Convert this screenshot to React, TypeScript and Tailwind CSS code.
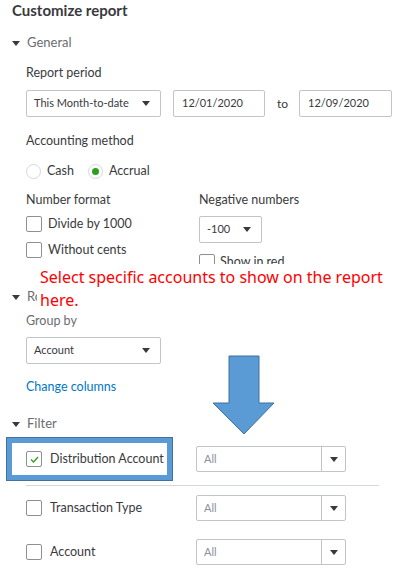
import React from "react";

const font = { fontFamily: "Lato, 'Open Sans', sans-serif" };

function Caret({ className = "" }: { className?: string }) {
  return (
    <svg width="8" height="5" viewBox="0 0 8 5" className={className}>
      <path d="M0 0 H8 L4 5 Z" fill="#393a3d" />
    </svg>
  );
}

function Section({ label, className = "", clip = false }: { label: string; className?: string; clip?: boolean }) {
  return (
    <div className={`flex h-5 items-center gap-[7px] pl-3 text-[13px] text-[#6b6c72] ${className}`}>
      <Caret />
      <span className={clip ? "block w-[10px] overflow-hidden whitespace-nowrap" : ""}>{label}</span>
    </div>
  );
}

function Box({ checked = false }: { checked?: boolean }) {
  return (
    <div className="flex h-4 w-4 shrink-0 items-center justify-center rounded-[2px] border border-[#8d9096] bg-white">
      {checked && (
        <svg width="9" height="7" viewBox="0 0 9 7">
          <path d="M1 3.5 L3.5 6 L8 1" fill="none" stroke="#2ca01c" strokeWidth="1.3" />
        </svg>
      )}
    </div>
  );
}

function Select({ value, className = "" }: { value: string; className?: string }) {
  return (
    <div className={`flex h-[27px] items-center justify-between rounded-[2px] border border-[#c1c4c9] bg-white pl-[7px] pr-[10px] text-[11px] text-[#393a3d] ${className}`}>
      <span>{value}</span>
      <Caret />
    </div>
  );
}

function FilterSelect() {
  return (
    <div className="ml-auto mr-[56px] flex h-[26px] w-[150px] items-stretch rounded-[2px] border border-[#c1c4c9] bg-white text-[11px] text-[#8d9096]">
      <span className="flex flex-1 items-center pl-[7px]">All</span>
      <span className="flex w-[24px] items-center justify-center border-l border-[#c1c4c9]">
        <Caret />
      </span>
    </div>
  );
}

export default function App() {
  return (
    <div className="relative h-[582px] w-[402px] overflow-hidden bg-white text-[#393a3d]" style={font}>
      <div className="flex flex-col">
        <div className="h-5 pl-3 text-[15px] font-bold leading-5 text-[#393a3d]">Customize report</div>

        <Section label="General" className="mt-[13px]" />

        <div className="mt-[10px] h-5 pl-[26px] text-[12.5px] leading-5">Report period</div>
        <div className="mt-[7px] flex items-center pl-[26px]">
          <Select value="This Month-to-date" className="w-[135px]" />
          <div className="ml-3 flex h-[27px] w-[92px] items-center rounded-[2px] border border-[#c1c4c9] pl-[8px] text-[11px]">12/01/2020</div>
          <span className="ml-3 w-[22px] text-[12px]">to</span>
          <div className="flex h-[27px] w-[93px] items-center rounded-[2px] border border-[#c1c4c9] pl-[8px] text-[11px]">12/09/2020</div>
        </div>

        <div className="mt-[14px] h-5 pl-[26px] text-[12.5px] leading-5">Accounting method</div>
        <div className="mt-[10px] flex h-5 items-center pl-[26px] text-[12.5px]">
          <span className="h-[15px] w-[15px] rounded-full border border-[#d4d7dc]" />
          <span className="ml-[6px]">Cash</span>
          <span className="ml-[14px] flex h-[15px] w-[15px] items-center justify-center rounded-full border border-[#d4d7dc]">
            <span className="h-[7px] w-[7px] rounded-full bg-[#2ca01c]" />
          </span>
          <span className="ml-[6px]">Accrual</span>
        </div>

        <div className="mt-[9px] flex pl-[26px] text-[12.5px]">
          <div className="w-[173px]">
            <div className="h-5 leading-5">Number format</div>
            <div className="mt-[6px] flex h-4 items-center gap-[6px]">
              <Box />
              <span>Divide by 1000</span>
            </div>
            <div className="mt-[10px] flex h-4 items-center gap-[6px]">
              <Box />
              <span>Without cents</span>
            </div>
          </div>
          <div>
            <div className="h-5 leading-5">Negative numbers</div>
            <Select value="-100" className="mt-[6px] h-[26px] w-[63px]" />
            <div className="mt-[11px] h-[11px] overflow-hidden">
              <div className="flex h-4 items-center gap-[5px]">
                <Box />
                <span>Show in red</span>
              </div>
            </div>
          </div>
        </div>

        <Section label="Rows/Columns" clip className="mt-[22px]" />
        <div className="mt-[4px] h-5 pl-[26px] text-[12.5px] leading-5 text-[#6b6c72]">Group by</div>
        <div className="mt-[6px] pl-[26px]">
          <Select value="Account" className="h-[26px] w-[135px]" />
        </div>
        <div className="mt-[13px] h-5 pl-[26px] text-[12.5px] leading-5 text-[#0077c5]">Change columns</div>

        <Section label="Filter" className="mt-[17px]" />

        <div className="relative mt-[12px] flex h-[26px] items-center pl-[26px] text-[12.5px]">
          <div className="pointer-events-none absolute left-[6px] top-[-9px] h-[44px] w-[167px] border border-[#41719c] bg-[#5b9bd5] p-[5px]">
            <div className="h-full w-full bg-white" />
          </div>
          <div className="relative flex items-center gap-2">
            <Box checked />
            <span>Distribution Account</span>
          </div>
          <FilterSelect />
        </div>
        <div className="ml-[26px] mt-[13px] h-px w-[353px] bg-[#d4d7dc]" />
        <div className="mt-[9px] flex h-[26px] items-center pl-[26px] text-[12.5px]">
          <div className="flex items-center gap-2">
            <Box />
            <span>Transaction Type</span>
          </div>
          <FilterSelect />
        </div>
        <div className="mt-[18px] flex h-[26px] items-center pl-[26px] text-[12.5px]">
          <div className="flex items-center gap-2">
            <Box />
            <span>Account</span>
          </div>
          <FilterSelect />
        </div>
      </div>

      <div
        className="absolute left-[37px] top-[264px] h-[48px] w-[365px] bg-white pl-[3px] pt-[2px] text-[16px] leading-[23px] text-[#ff0000]"
        style={{ fontFamily: "'Noto Sans', sans-serif" }}
      >
        Select specific accounts to show on the report here.
      </div>

      <svg className="absolute left-[212px] top-[355px]" width="64" height="82" viewBox="0 0 64 82">
        <path d="M17 1 H47 V48 H62 L32 79 L1 48 H17 Z" fill="#5b9bd5" stroke="#41719c" strokeWidth="1" />
      </svg>
    </div>
  );
}
